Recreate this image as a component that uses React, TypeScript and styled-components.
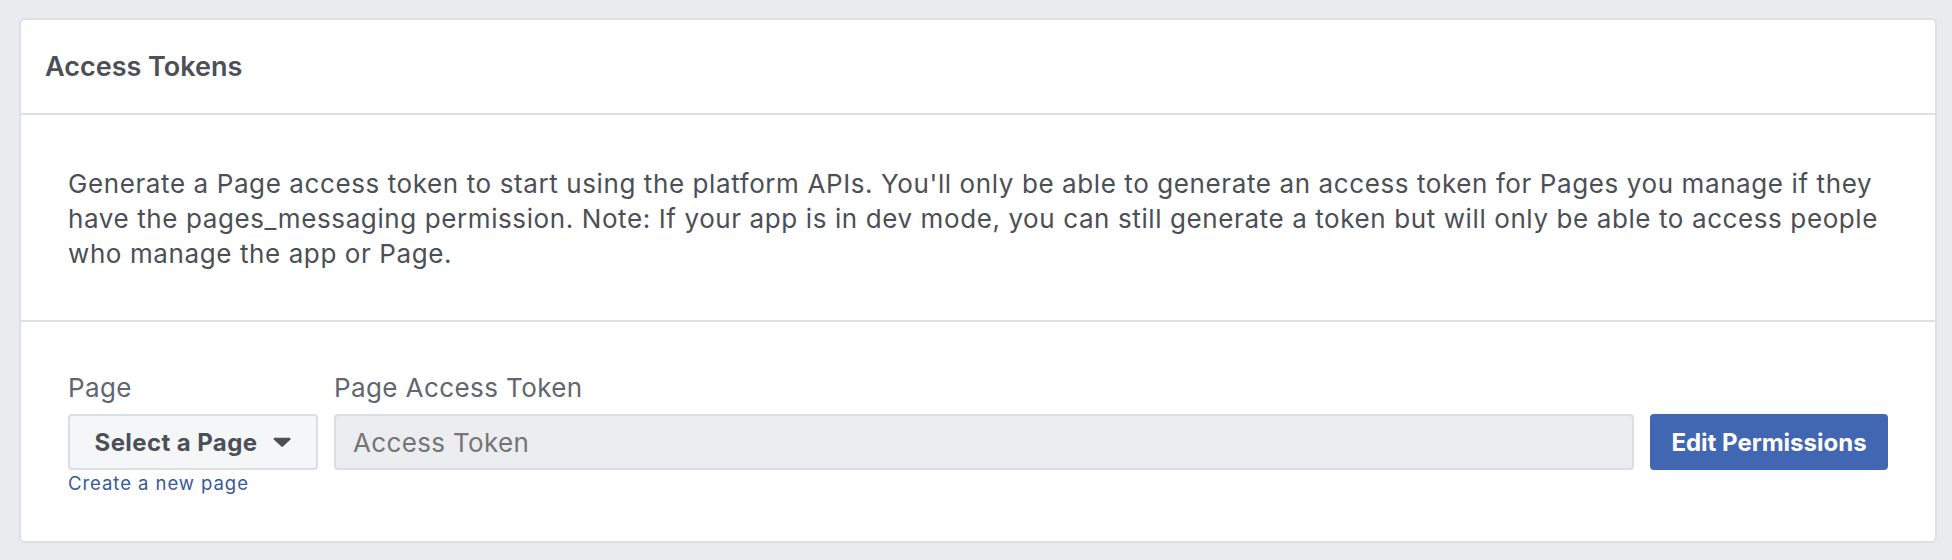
import styled, { createGlobalStyle } from "styled-components";

const GlobalStyle = createGlobalStyle`
  html, body {
    margin: 0;
    padding: 0;
    background-color: #e9ebee;
  }

  body {
    font-family: Inter, "Liberation Sans", Arial, sans-serif;
    color: #4b4f56;
    -webkit-font-smoothing: antialiased;
  }
`;

const Page = styled.div`
  padding: 18px 15px 18px 19px;
`;

const Card = styled.section`
  background-color: #fff;
  border: 2px solid #dddfe2;
  border-radius: 6px;
`;

const CardHeader = styled.header`
  height: 93px;
  display: flex;
  align-items: center;
  padding: 0 24px;
  border-bottom: 2px solid #dddfe2;
`;

const Title = styled.h2`
  margin: 0;
  font-size: 27px;
  font-weight: 600;
  color: #4b4f56;
`;

const Intro = styled.div`
  padding: 51px 47px 49px;
  border-bottom: 2px solid #dddfe2;
`;

const IntroText = styled.p`
  margin: 0;
  font-size: 26px;
  line-height: 35px;
  letter-spacing: 0.6px;
  color: #4b4f56;
`;

const Form = styled.div`
  display: grid;
  grid-template-columns: 250px 1fr 238px;
  column-gap: 16px;
  padding: 51px 47px 46px;
`;

const Label = styled.label<{ col: number }>`
  grid-column: ${(props) => props.col};
  grid-row: 1;
  font-size: 26px;
  line-height: 30px;
  letter-spacing: 0.4px;
  color: #606770;
  margin-bottom: 11px;
`;

const SelectBtn = styled.div`
  grid-column: 1;
  grid-row: 2;
  height: 56px;
  box-sizing: border-box;
  display: flex;
  align-items: center;
  justify-content: center;
  gap: 16px;
  background-color: #f5f6f7;
  border: 2px solid #dadde1;
  border-radius: 4px;
  font-size: 24px;
  font-weight: 700;
  letter-spacing: 0.4px;
  color: #4b4f56;
  cursor: pointer;
`;

const TokenInput = styled.input`
  grid-column: 2;
  grid-row: 2;
  height: 56px;
  box-sizing: border-box;
  width: 100%;
  margin: 0;
  padding: 0 17px;
  background-color: #ebedf0;
  border: 2px solid #dadde1;
  border-radius: 4px;
  font-family: inherit;
  font-size: 26px;
  letter-spacing: 0.35px;
  color: #4b4f56;
  outline: none;

  ::placeholder {
    color: #606770;
  }
`;

const PrimaryBtn = styled.button`
  grid-column: 3;
  grid-row: 2;
  height: 56px;
  margin: 0;
  padding: 0;
  background-color: #4267b2;
  border: none;
  border-radius: 4px;
  font-family: inherit;
  font-size: 24px;
  font-weight: 700;
  color: #fff;
  cursor: pointer;
`;

const CreateLink = styled.a`
  grid-column: 1;
  grid-row: 3;
  margin-top: 1px;
  font-size: 18.5px;
  line-height: 24px;
  letter-spacing: 0.95px;
  color: #385898;
  text-decoration: none;
  white-space: nowrap;
`;

function Caret() {
  return (
    <svg width="18" height="10" viewBox="0 0 18 10">
      <path
        d="M1.6 0.8h14.8a1.1 1.1 0 0 1 .8 1.9l-6.9 6.6a1.6 1.6 0 0 1-2.2 0L1 2.7A1.1 1.1 0 0 1 1.6 0.8z"
        fill="#4b4f56"
      />
    </svg>
  );
}

function App() {
  return (
    <>
      <GlobalStyle />
      <Page>
        <Card>
          <CardHeader>
            <Title>Access Tokens</Title>
          </CardHeader>
          <Intro>
            <IntroText>
              Generate a Page access token to start using the platform APIs. You'll only be able to generate an access
              token for Pages you manage if they have the pages_messaging permission. Note: If your app is in dev mode,
              you can still generate a token but will only be able to access people who manage the app or Page.
            </IntroText>
          </Intro>
          <Form>
            <Label col={1}>Page</Label>
            <Label col={2}>Page Access Token</Label>
            <SelectBtn>
              Select a Page
              <Caret />
            </SelectBtn>
            <TokenInput placeholder="Access Token" readOnly />
            <PrimaryBtn>Edit Permissions</PrimaryBtn>
            <CreateLink href="#">Create a new page</CreateLink>
          </Form>
        </Card>
      </Page>
    </>
  );
}

export default App;
